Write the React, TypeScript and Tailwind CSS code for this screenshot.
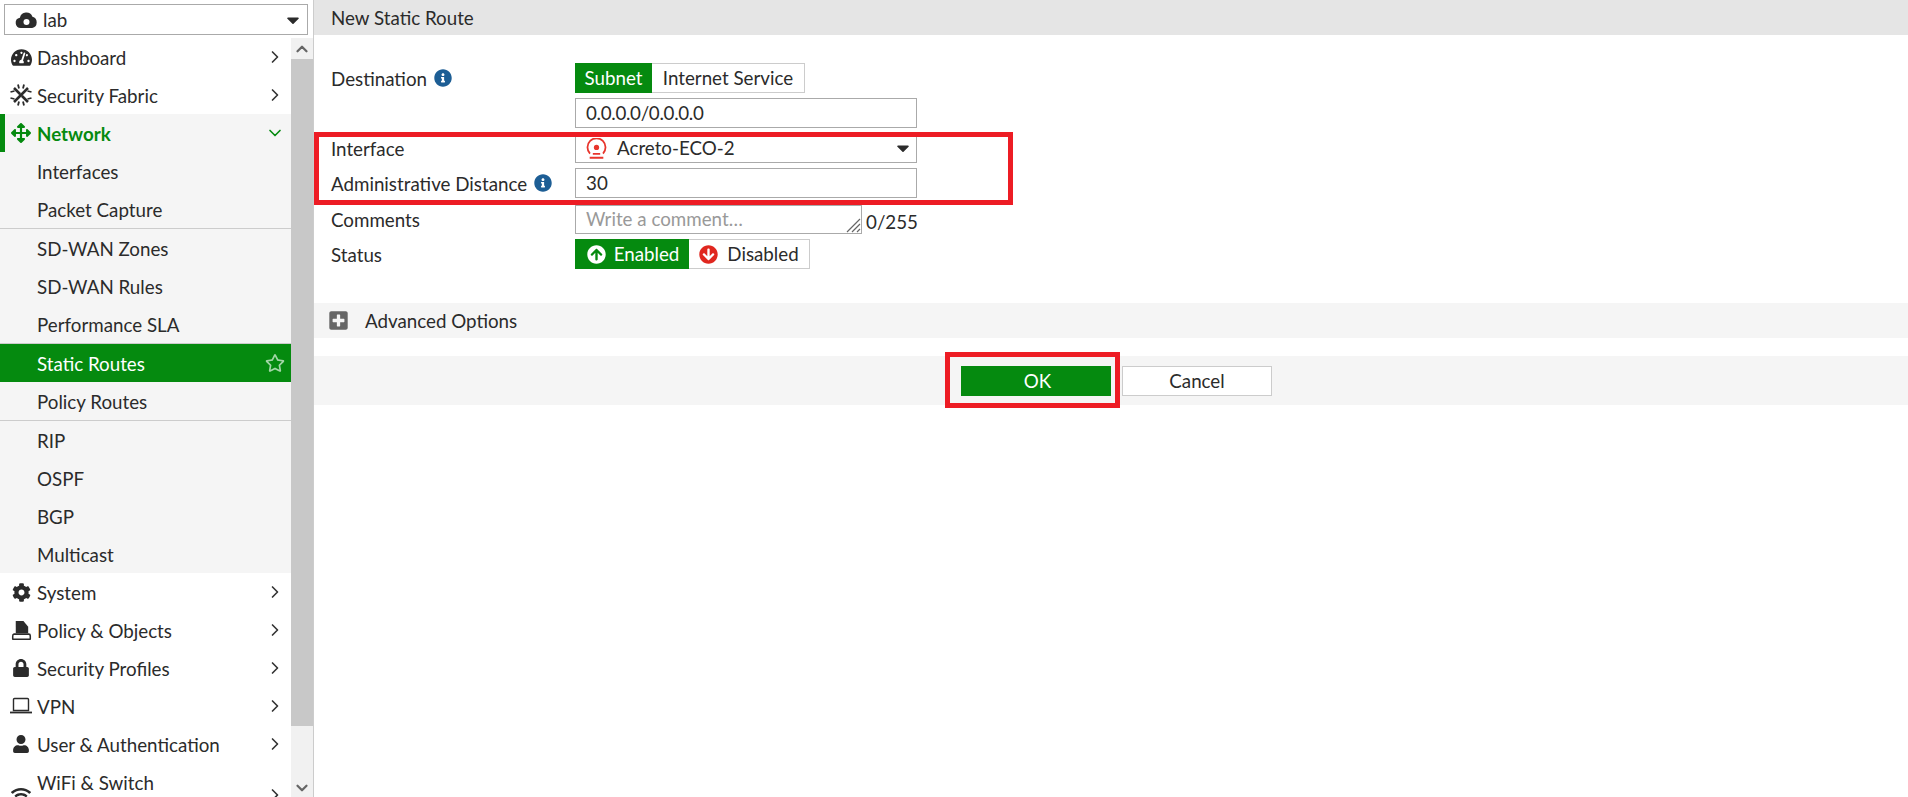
import {
  FaArrowCircleDown,
  FaArrowCircleUp,
  FaArrowsAlt,
  FaCaretDown,
  FaCog,
  FaInfoCircle,
  FaLock,
  FaPlusSquare,
  FaRegStar,
  FaTachometerAlt,
  FaUser,
  FaWifi,
} from "react-icons/fa";
import { ChevronDown, ChevronRight, ChevronUp } from "lucide-react";
import type { ReactNode } from "react";

function CloudIcon() {
  return (
    <svg viewBox="0 0 24 18" className="h-[17px] w-[23px]" fill="#2b2b2b">
      <path
        fillRule="evenodd"
        d="M6 18a5.500 5.500 0 0 1-1-10.900A7 7 0 0 1 18.300 6 6.200 6.200 0 0 1 18 18H6zm6-9.500a3.200 3.200 0 1 0 0 6.400 3.200 3.200 0 0 0 0-6.400z"
      />
    </svg>
  );
}

function FabricIcon() {
  return (
    <svg viewBox="0 0 22 22" className="h-[22px] w-[22px]" stroke="#2b2b2b" fill="none">
      <path d="M4 4l6 6M12 12l6 6M18 4L4 18" strokeWidth="2.600" />
      <path d="M0.500 8l4-1M21.500 8l-4-1M0.500 14l4 1M21.500 14l-4 1M8 0.500l1 4M14 0.500l-1 4M8 21.500l1-4M14 21.500l-1-4" strokeWidth="1.800" />
    </svg>
  );
}

function PolicyIcon() {
  return (
    <svg viewBox="0 0 22 22" className="h-[21px] w-[21px]" fill="#2b2b2b">
      <path d="M5 1h8l5 6v7H5z" />
      <path d="M3 14h15.500a2.500 2.500 0 0 1 2.500 2.500V20a1 1 0 0 1-1 1H2a1 1 0 0 1-1-1v-3a3 3 0 0 1 2-3zm0 1.700c-.3.400-.4.800-.4 1.300v2.400h16.800v-2.900c0-.500-.400-.800-.900-.800z" fillRule="evenodd" />
    </svg>
  );
}

function LaptopIcon() {
  return (
    <svg viewBox="0 0 22 18" className="h-[18px] w-[22px]" fill="none" stroke="#2b2b2b" strokeWidth="1.400">
      <path d="M3.500 13.500v-11a1 1 0 0 1 1-1h13a1 1 0 0 1 1 1v11z" />
      <path d="M0 15.500h22" strokeWidth="1.800" />
    </svg>
  );
}

function InterfaceIcon() {
  return (
    <svg viewBox="0 0 20 20" className="h-[21px] w-[21px]" fill="none" stroke="#e8352c">
      <path d="M3.800 14.800a8.600 8.600 0 1 1 12.400 0" strokeWidth="1.700" />
      <circle cx="10" cy="9" r="2.500" fill="#e8352c" stroke="none" />
      <path d="M6.500 15.200h7M3.500 18.800h13" strokeWidth="1.700" />
    </svg>
  );
}

function InfoIcon() {
  return <FaInfoCircle className="text-[18px] text-[#1d5e95]" />;
}

function Row({ icon, label, active }: { icon: ReactNode; label: string; active?: boolean }) {
  return (
    <div className={`relative flex h-[38px] items-center ${active ? "bg-[#f5f5f5] font-bold text-[#058a0f]" : ""}`}>
      {active && <div className="absolute inset-y-0 left-0 w-[5px] bg-[#058a0f]" />}
      <span className="flex w-[37px] shrink-0 justify-center pl-[5px]">{icon}</span>
      <span className="flex-1 pt-[3px]">{label}</span>
      {active ? (
        <ChevronDown className="mr-[6px] h-[20px] w-[20px] text-[#058a0f]" strokeWidth={2} />
      ) : (
        <ChevronRight className="mr-[6px] h-[20px] w-[20px] text-[#333]" strokeWidth={2} />
      )}
    </div>
  );
}

function SubItem({ label, selected }: { label: string; selected?: boolean }) {
  return (
    <div className={`flex h-[38px] items-center justify-between pl-[37px] pr-[6px] ${selected ? "bg-[#058a0f] text-white" : ""}`}>
      <span className="pt-[3px]">{label}</span>
      {selected && <FaRegStar className="text-[20px] text-[#a3d6a7]" />}
    </div>
  );
}

function Sidebar() {
  return (
    <aside className="flex h-full w-[313px] shrink-0 flex-col bg-white">
      <div className="h-[38px] shrink-0 px-[4px] pt-[4px]">
        <div className="flex h-[31px] w-[304px] items-center border border-[#aaa] pl-[10px] pr-[4px]">
          <CloudIcon />
          <span className="ml-[5px] flex-1 pt-[1px]">lab</span>
          <FaCaretDown className="text-[20px] text-[#2b2b2b]" />
        </div>
      </div>
      <div className="flex min-h-0 flex-1">
        <nav className="w-[291px] shrink-0 overflow-hidden">
          <Row icon={<FaTachometerAlt className="text-[21px]" />} label="Dashboard" />
          <Row icon={<FabricIcon />} label="Security Fabric" />
          <Row icon={<FaArrowsAlt className="text-[20px] text-[#058a0f]" />} label="Network" active />
          <div className="bg-[#f5f5f5]">
            <div className="border-b border-[#ccc]">
              <SubItem label="Interfaces" />
              <SubItem label="Packet Capture" />
            </div>
            <div className="border-b border-[#ccc]">
              <SubItem label="SD-WAN Zones" />
              <SubItem label="SD-WAN Rules" />
              <SubItem label="Performance SLA" />
            </div>
            <div className="border-b border-[#ccc]">
              <SubItem label="Static Routes" selected />
              <SubItem label="Policy Routes" />
            </div>
            <SubItem label="RIP" />
            <SubItem label="OSPF" />
            <SubItem label="BGP" />
            <SubItem label="Multicast" />
          </div>
          <Row icon={<FaCog className="text-[19px]" />} label="System" />
          <Row icon={<PolicyIcon />} label="Policy & Objects" />
          <Row icon={<FaLock className="text-[18px]" />} label="Security Profiles" />
          <Row icon={<LaptopIcon />} label="VPN" />
          <Row icon={<FaUser className="text-[18px]" />} label="User & Authentication" />
          <div className="flex h-[64px] items-center">
            <span className="flex w-[37px] shrink-0 justify-center pl-[5px]">
              <FaWifi className="text-[20px]" />
            </span>
            <span className="h-[48px] flex-1 leading-[24px]">WiFi & Switch</span>
            <ChevronRight className="mr-[6px] h-[20px] w-[20px] text-[#333]" strokeWidth={2} />
          </div>
        </nav>
        <div className="flex w-[22px] shrink-0 flex-col bg-[#f1f1f1]">
          <div className="flex h-[21px] shrink-0 items-center justify-center">
            <ChevronUp className="h-[18px] w-[18px] text-[#666]" strokeWidth={3} />
          </div>
          <div className="h-[667px] shrink-0 bg-[#c8c8c8]" />
          <div className="flex flex-1 items-end justify-center">
            <ChevronDown className="h-[18px] w-[18px] text-[#666]" strokeWidth={3} />
          </div>
        </div>
      </div>
    </aside>
  );
}

function Field({ label, info, children, className }: { label?: string; info?: boolean; children: ReactNode; className?: string }) {
  return (
    <div className={`flex items-center ${className ?? ""}`}>
      <div className="flex w-[261px] shrink-0 items-center gap-[7px] pl-[17px]">
        {label && <span className="pt-[2px]">{label}</span>}
        {info && <InfoIcon />}
      </div>
      {children}
    </div>
  );
}

function Form() {
  return (
    <main className="relative min-w-0 flex-1 border-l border-[#ccc]">
      <div className="flex h-[35px] items-center bg-[#e5e5e5] pl-[17px] pt-[2px]">New Static Route</div>
      <div className="pt-[28px]">
        <Field label="Destination" info className="h-[30px]">
          <div className="flex h-[30px]">
            <div className="flex w-[77px] items-center justify-center bg-[#058a0f] pt-[1px] text-white">Subnet</div>
            <div className="flex w-[153px] items-center justify-center border border-l-0 border-[#ccc]">Internet Service</div>
          </div>
        </Field>
        <Field className="mt-[5px] h-[30px]">
          <div className="flex h-[30px] w-[342px] items-center border border-[#aaa] pl-[10px] tracking-[-0.3px]">0.0.0.0/0.0.0.0</div>
        </Field>
        <Field label="Interface" className="mt-[5px] h-[30px]">
          <div className="flex h-[30px] w-[342px] items-center border border-[#aaa] pl-[10px] pr-[3px]">
            <InterfaceIcon />
            <span className="ml-[10px] flex-1">Acreto-ECO-2</span>
            <FaCaretDown className="text-[20px] text-[#2b2b2b]" />
          </div>
        </Field>
        <Field label="Administrative Distance" info className="mt-[5px] h-[30px]">
          <div className="flex h-[30px] w-[342px] items-center border border-[#aaa] pl-[10px]">30</div>
        </Field>
        <Field label="Comments" className="mt-[6px] h-[30px]">
          <div className="relative flex h-[29px] w-[287px] items-center border border-[#aaa] pl-[10px] text-[#999]">
            Write a comment…
            <svg viewBox="0 0 16 16" className="absolute bottom-0 right-0 h-[16px] w-[16px]" stroke="#666" fill="none">
              <path d="M15 2L2 15M15 7L7 15M15 12l-3 3" strokeWidth="1.200" />
            </svg>
          </div>
          <span className="ml-[4px] mt-[6px]">0/255</span>
        </Field>
        <Field label="Status" className="mt-[5px] h-[30px]">
          <div className="flex h-[30px]">
            <div className="flex w-[114px] items-center justify-center gap-[8px] bg-[#058a0f] pl-[2px] text-white">
              <FaArrowCircleUp className="text-[19px]" />
              Enabled
            </div>
            <div className="flex w-[121px] items-center justify-center gap-[9px] border border-l-0 border-[#ccc]">
              <FaArrowCircleDown className="text-[19px] text-[#e0271f]" />
              Disabled
            </div>
          </div>
        </Field>
        <div className="mt-[34px] flex h-[35px] items-center bg-[#f5f5f5] pl-[14px]">
          <FaPlusSquare className="text-[21px] text-[#666]" />
          <span className="ml-[16px] pt-[2px]">Advanced Options</span>
        </div>
        <div className="mt-[18px] flex h-[49px] items-center justify-center gap-[11px] bg-[#f5f5f5] pl-[11px]">
          <div className="flex h-[30px] w-[150px] items-center justify-center bg-[#058a0f] pl-[3px] pt-[2px] text-white">OK</div>
          <div className="flex h-[30px] w-[150px] items-center justify-center border border-[#ccc] bg-white pt-[2px]">Cancel</div>
        </div>
      </div>
      {/* annotation boxes drawn over the form */}
      <div className="absolute left-[0px] top-[132px] h-[73px] w-[699px] border-[5px] border-[#ed1c24]" />
      <div className="absolute left-[631px] top-[352px] h-[56px] w-[175px] border-[5px] border-[#ed1c24]" />
    </main>
  );
}

export default function App() {
  return (
    <div className="flex h-[797px] w-[1908px] overflow-hidden bg-white font-['Lato',sans-serif] text-[18.75px] text-[#2b2b2b]">
      <Sidebar />
      <Form />
    </div>
  );
}
